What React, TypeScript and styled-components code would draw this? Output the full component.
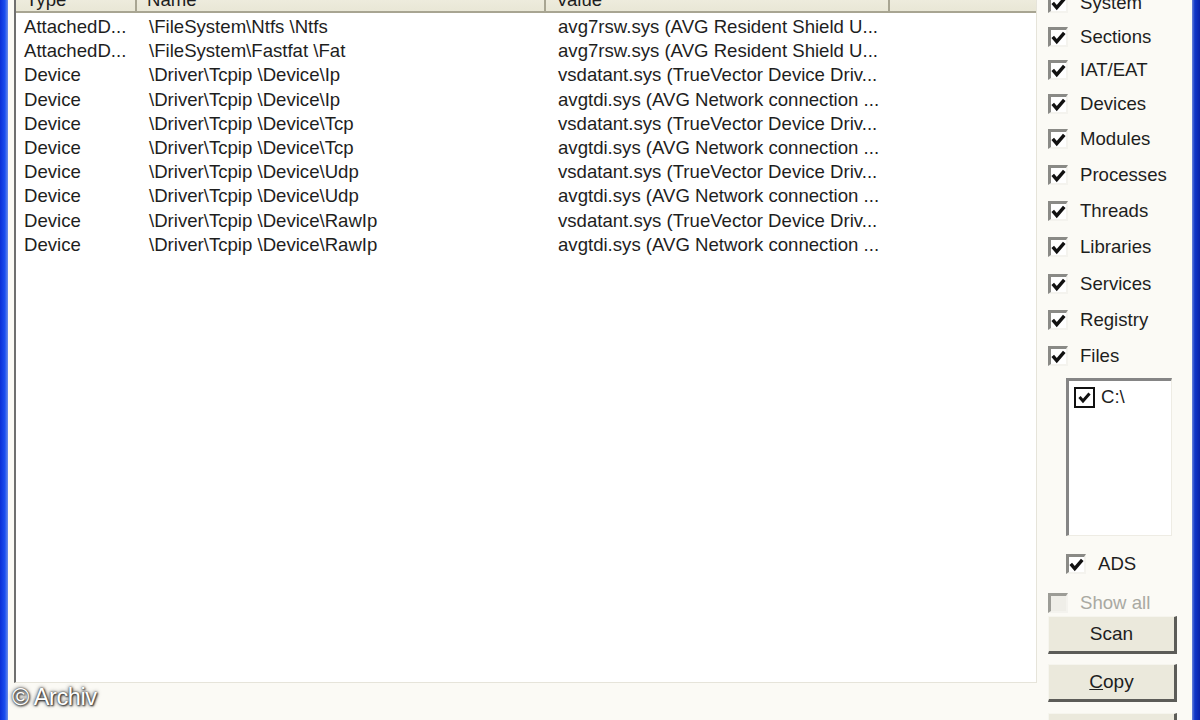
import React from "react";
import styled, { createGlobalStyle } from "styled-components";

const Global = createGlobalStyle`
  html, body { margin: 0; padding: 0; background: #fbfaf5; }
  body { font-family: "Liberation Sans", Arial, sans-serif; }
`;

const Window = styled.div`
  width: 1200px;
  height: 720px;
  overflow: hidden;
  display: flex;
  position: relative;
  background: #fbfaf5;
  color: #1e1e1e;
  font-family: "Liberation Sans", Arial, sans-serif;
  font-size: 18.6px;
`;

const Frame = styled.div<{ $side: "l" | "r" }>`
  width: 8px;
  flex: none;
  background: ${(p) =>
    p.$side === "l"
      ? "linear-gradient(90deg, #0a2fd6 0%, #1a4ef0 60%, #6d8fe8 100%)"
      : "linear-gradient(90deg, #6d86d8 0%, #1037c8 35%, #0a22a8 100%)"};
`;

const Main = styled.div`
  flex: none;
  box-sizing: border-box;
  width: 1029px;
  padding-left: 6px;
  display: flex;
  flex-direction: column;
`;

const ListView = styled.div`
  margin-top: -14px;
  height: 697px;
  flex: none;
  box-sizing: border-box;
  border-left: 2px solid #6f6f6f;
  border-top: 2px solid #6f6f6f;
  border-right: 1px solid #e6e4da;
  border-bottom: 1px solid #e6e4da;
  background: #ffffff;
  display: flex;
  flex-direction: column;
`;

const Header = styled.div`
  height: 23px;
  flex: none;
  display: grid;
  grid-template-columns: 121px 409px 344px 1fr;
  background: linear-gradient(#f2f0e4, #e9e7d6);
  border-bottom: 2px solid #a8a592;
`;

const HeadCell = styled.div<{ $last?: boolean }>`
  padding-left: 10px;
  line-height: 23px;
  border-right: ${(p) => (p.$last ? "none" : "2px solid #a8a592")};
  white-space: nowrap;
  overflow: hidden;
`;

const Body = styled.div`
  padding-top: 2px;
  display: flex;
  flex-direction: column;
`;

const Row = styled.div`
  height: 24.2px;
  flex: none;
  display: grid;
  grid-template-columns: 121px 409px 344px 1fr;
  align-items: center;
`;

const Cell = styled.div<{ $pad: number }>`
  padding-left: ${(p) => p.$pad}px;
  white-space: nowrap;
  overflow: hidden;
`;

const Side = styled.div`
  flex: 1;
  padding-left: 11px;
  display: flex;
  flex-direction: column;
`;

const CheckList = styled.div`
  margin-top: -13.75px;
  flex: none;
  display: flex;
  flex-direction: column;
`;

const CheckRow = styled.div<{ $indent?: number; $h?: number; $disabled?: boolean }>`
  height: ${(p) => p.$h ?? 35.3}px;
  flex: none;
  display: flex;
  align-items: center;
  gap: 12px;
  padding-left: ${(p) => p.$indent ?? 0}px;
  color: ${(p) => (p.$disabled ? "#a9a9a2" : "#1e1e1e")};
  white-space: nowrap;
`;

const Box = styled.span<{ $disabled?: boolean }>`
  width: 20px;
  height: 20px;
  flex: none;
  box-sizing: border-box;
  border-top: 3px solid ${(p) => (p.$disabled ? "#9c9c96" : "#8a8a86")};
  border-left: 3px solid ${(p) => (p.$disabled ? "#9c9c96" : "#8a8a86")};
  border-right: 2px solid #f4f3ee;
  border-bottom: 2px solid #f4f3ee;
  background: ${(p) => (p.$disabled ? "#efeee8" : "#ffffff")};
  display: flex;
  align-items: center;
  justify-content: center;
`;

const DriveBox = styled.div`
  margin-left: 18px;
  margin-top: 4px;
  width: 106px;
  height: 158px;
  flex: none;
  box-sizing: border-box;
  border-top: 3px solid #858585;
  border-left: 3px solid #858585;
  border-right: 1px solid #eeece4;
  border-bottom: 1px solid #eeece4;
  background: #ffffff;
  padding: 5px 0 0 5px;
`;

const DriveItem = styled.div`
  display: flex;
  align-items: center;
  gap: 6px;
  height: 22px;
`;

const FlatBox = styled.span`
  width: 21px;
  height: 21px;
  box-sizing: border-box;
  border: 2.5px solid #111;
  display: flex;
  align-items: center;
  justify-content: center;
  background: #fff;
`;

const Button = styled.div<{ $top: number }>`
  margin-top: ${(p) => p.$top}px;
  width: 129px;
  height: 38px;
  flex: none;
  box-sizing: border-box;
  background: #ebe9dc;
  border-top: 1px solid #f6f5ee;
  border-left: 1px solid #f6f5ee;
  border-right: 3px solid #5c5c58;
  border-bottom: 3px solid #5c5c58;
  display: flex;
  align-items: center;
  justify-content: center;
  font-size: 19px;
`;

const Under = styled.span`
  text-decoration: underline;
`;

const Watermark = styled.div`
  position: absolute;
  left: 12px;
  top: 684px;
  color: #ffffff;
  font-family: "Liberation Sans", Arial, sans-serif;
  font-size: 23.5px;
  letter-spacing: -0.4px;
  text-shadow: 0 0 2px #333, 0 0 4px #444, 1px 1px 2px #222;
`;

const Check = ({ size = 15 }: { size?: number }) => (
  <svg width={size} height={size} viewBox="0 0 13 13">
    <path d="M1.5 6 L5 10 L11.5 2.5" fill="none" stroke="#111" strokeWidth="3" />
  </svg>
);

const rows: [string, string, string][] = [
  ["AttachedD...", "\\FileSystem\\Ntfs \\Ntfs", "avg7rsw.sys (AVG Resident Shield U..."],
  ["AttachedD...", "\\FileSystem\\Fastfat \\Fat", "avg7rsw.sys (AVG Resident Shield U..."],
  ["Device", "\\Driver\\Tcpip \\Device\\Ip", "vsdatant.sys (TrueVector Device Driv..."],
  ["Device", "\\Driver\\Tcpip \\Device\\Ip", "avgtdi.sys (AVG Network connection ..."],
  ["Device", "\\Driver\\Tcpip \\Device\\Tcp", "vsdatant.sys (TrueVector Device Driv..."],
  ["Device", "\\Driver\\Tcpip \\Device\\Tcp", "avgtdi.sys (AVG Network connection ..."],
  ["Device", "\\Driver\\Tcpip \\Device\\Udp", "vsdatant.sys (TrueVector Device Driv..."],
  ["Device", "\\Driver\\Tcpip \\Device\\Udp", "avgtdi.sys (AVG Network connection ..."],
  ["Device", "\\Driver\\Tcpip \\Device\\RawIp", "vsdatant.sys (TrueVector Device Driv..."],
  ["Device", "\\Driver\\Tcpip \\Device\\RawIp", "avgtdi.sys (AVG Network connection ..."],
];

const options: [string, number][] = [
  ["System", 33.5], ["Sections", 33.5], ["IAT/EAT", 33.5], ["Devices", 34.5],
  ["Modules", 36], ["Processes", 36], ["Threads", 36], ["Libraries", 36],
  ["Services", 36.5], ["Registry", 36.5], ["Files", 36],
];

export default function App() {
  return (
    <Window>
      <Global />
      <Frame $side="l" />
      <Main>
        <ListView>
          <Header>
            <HeadCell>Type</HeadCell>
            <HeadCell>Name</HeadCell>
            <HeadCell>Value</HeadCell>
            <HeadCell $last />
          </Header>
          <Body>
            {rows.map((r, i) => (
              <Row key={i}>
                <Cell $pad={8}>{r[0]}</Cell>
                <Cell $pad={12}>{r[1]}</Cell>
                <Cell $pad={12}>{r[2]}</Cell>
                <Cell $pad={0} />
              </Row>
            ))}
          </Body>
        </ListView>
      </Main>
      <Side>
        <CheckList>
          {options.map(([o, h]) => (
            <CheckRow key={o} $h={h}>
              <Box><Check /></Box>
              {o}
            </CheckRow>
          ))}
        </CheckList>
        <DriveBox>
          <DriveItem>
            <FlatBox><Check size={13} /></FlatBox>
            C:\
          </DriveItem>
        </DriveBox>
        <CheckRow $indent={18} $h={56}>
          <Box><Check /></Box>
          ADS
        </CheckRow>
        <CheckRow $h={22} $disabled>
          <Box $disabled />
          Show all
        </CheckRow>
        <Button $top={2}>Scan</Button>
        <Button $top={10}><span><Under>C</Under>opy</span></Button>
        <Button $top={11} />
      </Side>
      <Frame $side="r" />
      <Watermark>© Archiv</Watermark>
    </Window>
  );
}
